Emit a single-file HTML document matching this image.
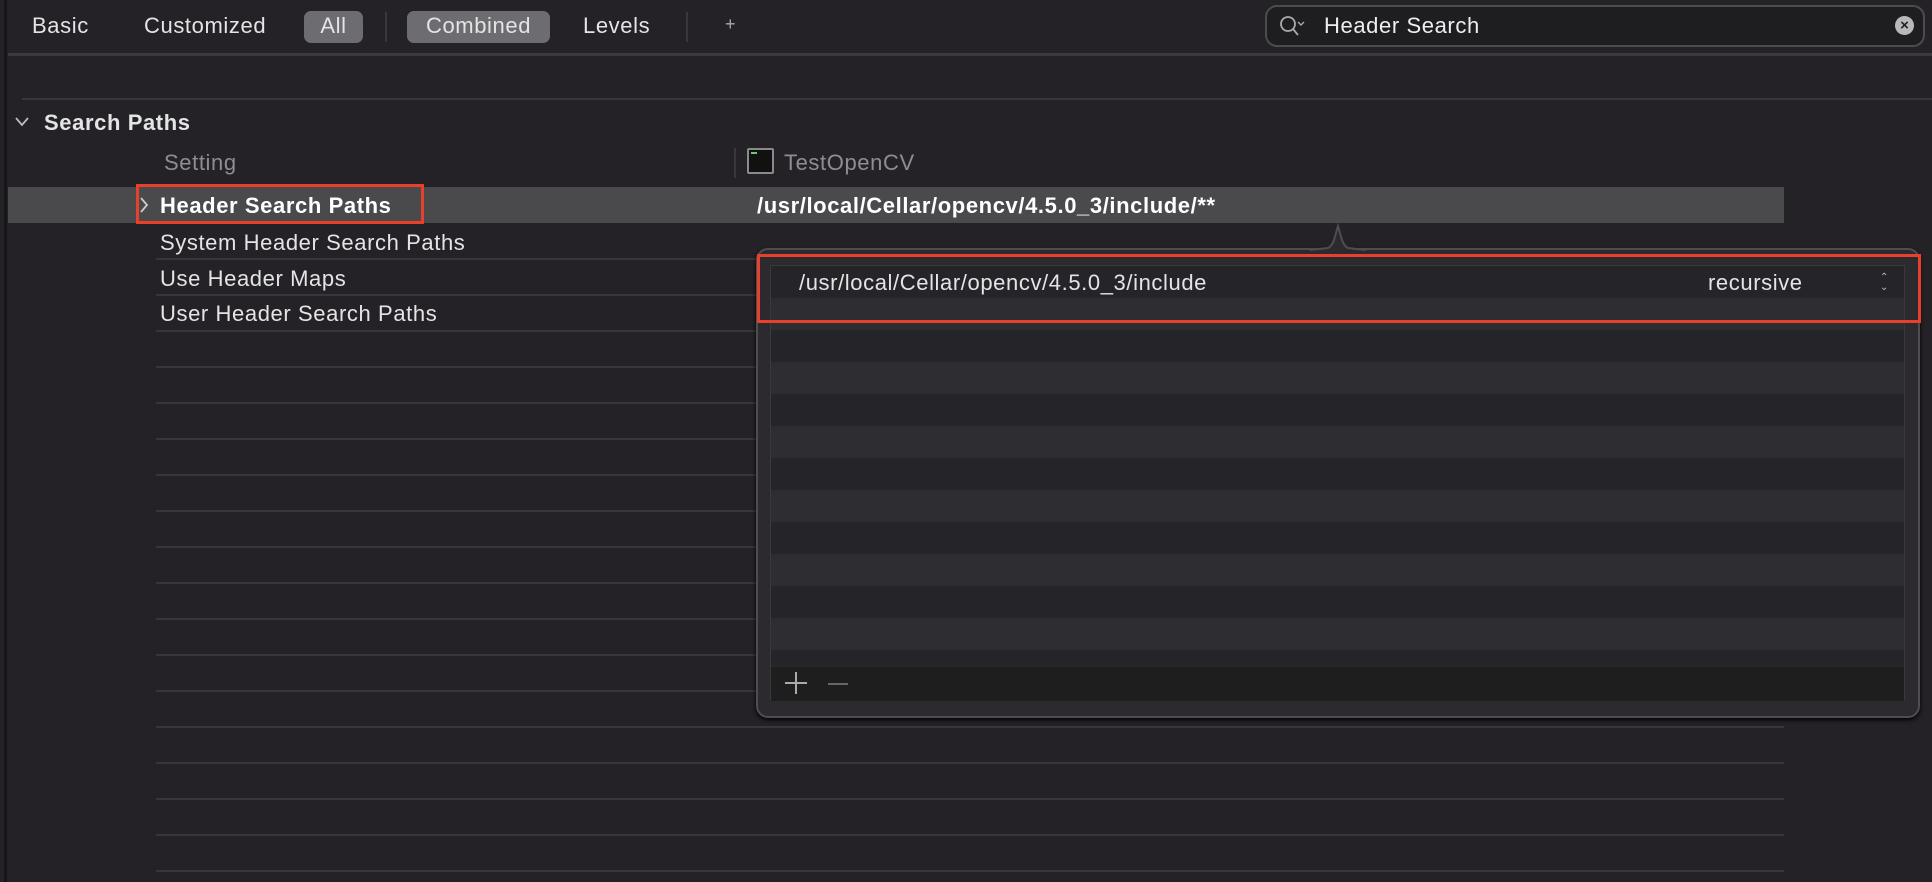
<!DOCTYPE html>
<html><head><meta charset="utf-8"><style>
*{margin:0;padding:0;box-sizing:border-box}
body{width:1932px;height:882px;background:#242226;font-family:"Liberation Sans",sans-serif;color:#e4e4e6;position:relative;overflow:hidden}
.a{position:absolute;white-space:nowrap}
.t{font-size:22px;line-height:24px;letter-spacing:0.6px}
.b{font-size:22px;font-weight:bold;line-height:24px;letter-spacing:0.6px}
.ln{position:absolute;height:2px;background:#38363a}
</style></head><body>
<div class="a" style="left:4px;top:0;width:3px;height:882px;background:#161518"></div>
<div class="a t" style="left:32px;top:14px">Basic</div>
<div class="a t" style="left:144px;top:14px">Customized</div>
<div class="a" style="left:304px;top:11px;width:59px;height:32px;border-radius:7px;background:#6d6c71"></div>
<div class="a t" style="left:304px;width:59px;text-align:center;top:14px">All</div>
<div class="a" style="left:385px;top:12px;width:2px;height:30px;background:#3a383c"></div>
<div class="a" style="left:407px;top:11px;width:143px;height:32px;border-radius:7px;background:#6d6c71"></div>
<div class="a t" style="left:407px;width:143px;text-align:center;top:14px">Combined</div>
<div class="a t" style="left:583px;top:14px">Levels</div>
<div class="a" style="left:686px;top:12px;width:2px;height:30px;background:#3a383c"></div>
<div class="a" style="left:725px;top:14px;font-size:18px;color:#aaa">+</div>
<div class="a" style="left:1265px;top:5px;width:660px;height:42px;border:2px solid #4c4b4f;border-radius:12px;background:#1e1d20"></div>
<svg class="a" style="left:1278px;top:14px" width="30" height="26"><circle cx="10" cy="10" r="7" stroke="#aaa" stroke-width="1.8" fill="none"/><line x1="15" y1="15" x2="20" y2="21" stroke="#aaa" stroke-width="1.8"/><path d="M20 8l3 3 3-3" stroke="#aaa" stroke-width="1.4" fill="none"/></svg>
<div class="a t" style="left:1324px;top:14px;color:#eee">Header Search</div>
<div class="a" style="left:1895px;top:16px;width:19px;height:19px;border-radius:50%;background:#b8b8bc;color:#222;font-size:15px;line-height:19px;text-align:center;font-weight:bold">×</div>
<div class="ln" style="left:8px;top:53px;width:1924px;background:#3c3a3e;height:3px"></div>
<div class="ln" style="left:22px;top:98px;width:1910px"></div>
<svg class="a" style="left:14px;top:116px" width="16" height="12"><path d="M2 2l6 7 6-7" stroke="#bbb" stroke-width="1.8" fill="none"/></svg>
<div class="a b" style="left:44px;top:111px">Search Paths</div>
<div class="a t" style="left:164px;top:151px;color:#8e8d92">Setting</div>
<div class="a" style="left:734px;top:148px;width:2px;height:30px;background:#3a383c"></div>
<div class="a" style="left:747px;top:148px;width:27px;height:26px;border:2px solid #8a8a8e;border-radius:2px;background:#111"></div>
<div class="a" style="left:751px;top:152px;width:6px;height:2px;background:#6c6"></div>
<div class="a t" style="left:784px;top:151px;color:#8e8d92">TestOpenCV</div>
<div class="a" style="left:8px;top:187px;width:1776px;height:36px;background:#4a494c"></div>
<svg class="a" style="left:139px;top:196px" width="10" height="18"><path d="M2 2l6 7-6 7" stroke="#ccc" stroke-width="1.8" fill="none"/></svg>
<div class="a b" style="left:160px;top:194px;color:#fff">Header Search Paths</div>
<div class="a b" style="left:757px;top:194px;color:#fff">/usr/local/Cellar/opencv/4.5.0_3/include/**</div>
<div class="a" style="left:136px;top:184px;width:288px;height:40px;border:3px solid #e8402a"></div>
<div class="a t" style="left:160px;top:231px">System Header Search Paths</div>
<div class="a t" style="left:160px;top:267px">Use Header Maps</div>
<div class="a t" style="left:160px;top:302px">User Header Search Paths</div>
<div class="ln" style="left:156px;top:258px;width:1628px"></div>
<div class="ln" style="left:156px;top:294px;width:1628px"></div>
<div class="ln" style="left:156px;top:330px;width:1628px"></div>
<div class="ln" style="left:156px;top:366px;width:1628px"></div>
<div class="ln" style="left:156px;top:402px;width:1628px"></div>
<div class="ln" style="left:156px;top:438px;width:1628px"></div>
<div class="ln" style="left:156px;top:474px;width:1628px"></div>
<div class="ln" style="left:156px;top:510px;width:1628px"></div>
<div class="ln" style="left:156px;top:546px;width:1628px"></div>
<div class="ln" style="left:156px;top:582px;width:1628px"></div>
<div class="ln" style="left:156px;top:618px;width:1628px"></div>
<div class="ln" style="left:156px;top:654px;width:1628px"></div>
<div class="ln" style="left:156px;top:690px;width:1628px"></div>
<div class="ln" style="left:156px;top:726px;width:1628px"></div>
<div class="ln" style="left:156px;top:762px;width:1628px"></div>
<div class="ln" style="left:156px;top:798px;width:1628px"></div>
<div class="ln" style="left:156px;top:834px;width:1628px"></div>
<div class="ln" style="left:156px;top:870px;width:1628px"></div>
<div class="a" style="left:756px;top:248px;width:1164px;height:470px;border:2px solid #4e4d52;border-radius:12px;background:#2c2a2f;box-shadow:0 2px 4px #000"></div>
<svg class="a" style="left:1310px;top:222px" width="56" height="30"><path d="M0 28 L18 26 Q22 24 24 18 L28 4 L32 18 Q34 24 38 26 L56 28" fill="#2c2a2f" stroke="#4e4d52" stroke-width="2"/></svg>
<div class="a" style="left:770px;top:265px;width:1135px;height:435px;background:#252428;border:1px solid #3a393d">
<div style="position:absolute;left:0;top:32px;width:100%;height:32px;background:#2e2d32"></div>
<div style="position:absolute;left:0;top:96px;width:100%;height:32px;background:#2e2d32"></div>
<div style="position:absolute;left:0;top:160px;width:100%;height:32px;background:#2e2d32"></div>
<div style="position:absolute;left:0;top:224px;width:100%;height:32px;background:#2e2d32"></div>
<div style="position:absolute;left:0;top:288px;width:100%;height:32px;background:#2e2d32"></div>
<div style="position:absolute;left:0;top:352px;width:100%;height:32px;background:#2e2d32"></div>
<div style="position:absolute;left:0;top:400px;width:100%;height:35px;background:#1e1e1f;border-top:1px solid #2a2a2c"></div>
</div>
<div class="a t" style="left:799px;top:271px">/usr/local/Cellar/opencv/4.5.0_3/include</div>
<div class="a t" style="left:1708px;top:271px">recursive</div>
<div class="a" style="left:1880px;top:273px;font-size:10px;line-height:10px;color:#bbb;text-align:center">⌃<br>⌄</div>
<div class="a" style="left:757px;top:254px;width:1164px;height:69px;border:3px solid #e8402a"></div>
<div class="a" style="left:785px;top:682px;width:22px;height:2px;background:#aaa"></div>
<div class="a" style="left:795px;top:672px;width:2px;height:22px;background:#aaa"></div>
<div class="a" style="left:828px;top:683px;width:20px;height:2px;background:#666"></div>
</body></html>
